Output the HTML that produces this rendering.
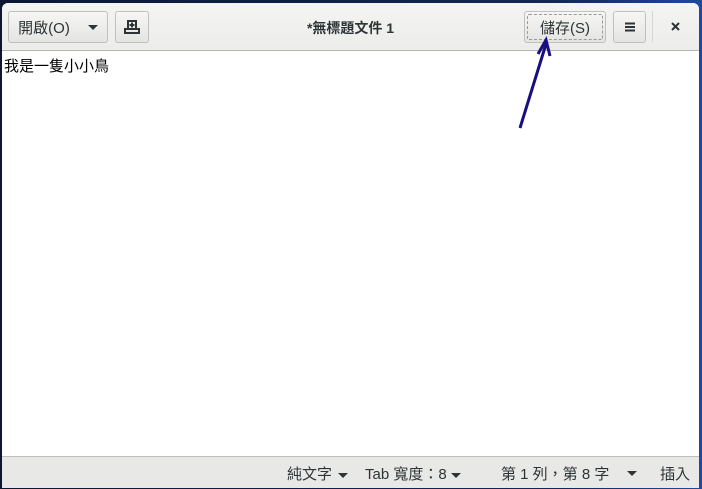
<!DOCTYPE html><html><head><meta charset="utf-8"><style>
body{margin:0;width:702px;height:489px;background:linear-gradient(90deg,#0b1733,#12285a 80%,#1d4aa0);overflow:hidden;position:relative;font-family:"Liberation Sans","Noto Sans CJK TC",sans-serif;}
svg{display:block;flex-shrink:0}
.win{position:absolute;left:2px;top:3px;width:697px;height:485px;background:#fff;border-radius:6px 6px 0 0;overflow:hidden}
.hdr{position:absolute;left:0;top:0;right:0;height:47px;background:linear-gradient(#f4f4f3,#ececea);border-bottom:1px solid #b6b6b3}
.btn{position:absolute;top:8px;height:32px;box-sizing:border-box;border:1px solid #c0c0bd;border-radius:3px;background:linear-gradient(#f6f6f5,#e4e4e2);font-size:15px;color:#2e3436;display:flex;align-items:center;justify-content:center}
.tri{display:inline-block;width:0;height:0;border-left:5px solid transparent;border-right:5px solid transparent;border-top:5px solid #2e3436}
.title{position:absolute;left:0;right:0;top:15px;text-align:center;font-weight:bold;font-size:14px;color:#2e3436}
.text{position:absolute;left:2px;top:52px;font-size:15px;color:#000}
.st{position:absolute;left:0;right:0;bottom:0;height:31px;background:#e8e8e7;border-top:1px solid #bdbdbb;font-size:15px;color:#2e3436}
.st span{position:absolute;top:6px}
</style></head><body>
<div class="win">
<div class="hdr">
<div class="btn" style="left:6px;width:100px">開啟(O)<span class="tri" style="margin-left:18px"></span></div>
<div class="btn" style="left:113px;width:34px"><svg width="16" height="16" viewBox="0 0 16 16" style="width:16px;height:16px"><path d="M4 10V2h8v8" fill="none" stroke="#2e3436" stroke-width="2"/><rect x="1" y="10" width="14" height="4" fill="none" stroke="#2e3436" stroke-width="2"/><path d="M8 3.5v5M5.5 6h5" stroke="#2e3436" stroke-width="2"/></svg></div>
<div class="title">*無標題文件 1</div>
<div class="btn" style="left:522px;width:82px"><div style="position:absolute;inset:2px;border:1px dashed #999;border-radius:2px"></div>儲存(S)</div>
<div class="btn" style="left:611px;width:33px"><svg width="10" height="10"><path d="M0 1.5h10M0 5h10M0 8.5h10" stroke="#2e3436" stroke-width="2"/></svg></div>
<div style="position:absolute;left:650px;top:8px;width:1px;height:31px;background:#d6d6d4"></div>
<div style="position:absolute;left:669px;top:19px"><svg width="9" height="9"><path d="M1 1l7 7M8 1l-7 7" stroke="#2e3436" stroke-width="2"/></svg></div>
</div>
<div class="text">我是一隻小小鳥</div>
<div class="st">
<span style="left:285px">純文字 <span class="tri" style="position:static;vertical-align:middle;margin-left:2px"></span></span>
<span style="left:363px">Tab 寬度：8 <span class="tri" style="position:static;vertical-align:middle;margin-left:0"></span></span>
<span style="left:499px">第 1 列，第 8 字</span>
<span style="left:625px;top:14px" class="tri"></span>
<span style="left:658px">插入</span>
</div>
</div>
<svg style="position:absolute;left:0;top:0" width="702" height="489"><path d="M520 128L546 44" stroke="#1a0f80" stroke-width="3"/><path d="M538 54L546 40L550 56" fill="none" stroke="#1a0f80" stroke-width="3"/></svg>
</body></html>
